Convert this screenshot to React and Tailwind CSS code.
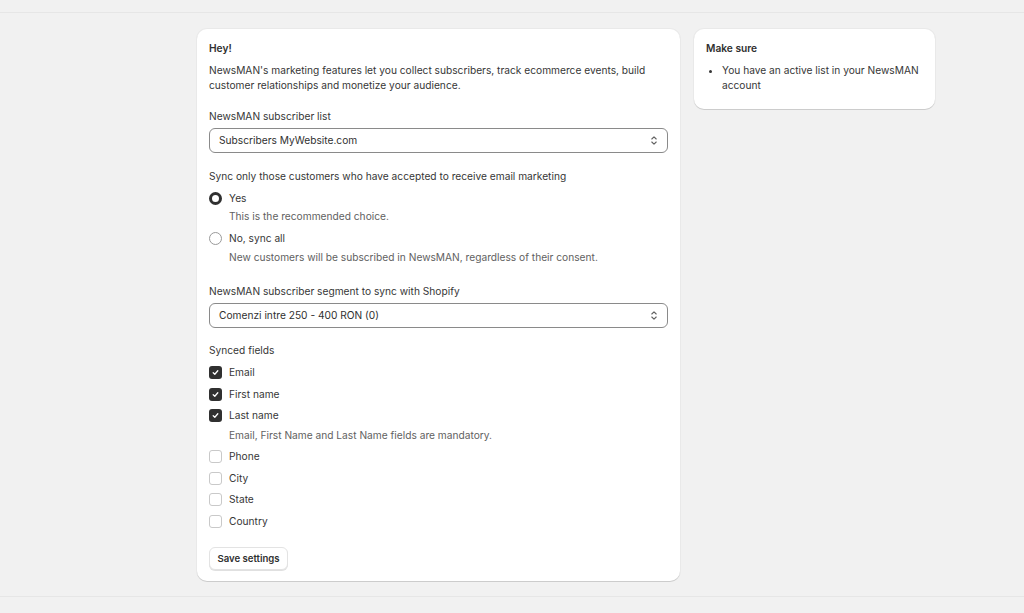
import React, { useState } from "react";

const font = { fontFamily: "Inter, 'Noto Sans', sans-serif" };

const SelectBox = ({ value }) => (
  <div className="mt-[4px] flex h-[25px] w-full items-center justify-between rounded-[6px] border border-[#8a8a8a] bg-white pl-[9px] pr-[9px] text-[#303030]">
    <span>{value}</span>
    <svg width="8" height="11" viewBox="0 0 8 11" fill="none" stroke="#616161" strokeWidth="1.1" strokeLinecap="round" strokeLinejoin="round">
      <path d="M1.8 4 L4 1.8 L6.2 4" />
      <path d="M1.8 7 L4 9.2 L6.2 7" />
    </svg>
  </div>
);

const Check = ({ checked, label }) => (
  <div className="flex h-[15px] items-center gap-[7px]">
    {checked ? (
      <span className="flex h-[13px] w-[13px] items-center justify-center rounded-[3px] bg-[#303030]">
        <svg width="9" height="9" viewBox="0 0 9 9" fill="none" stroke="white" strokeWidth="1.3" strokeLinecap="round" strokeLinejoin="round">
          <path d="M2.2 4.7 L3.8 6.2 L6.8 2.8" />
        </svg>
      </span>
    ) : (
      <span className="h-[13px] w-[13px] rounded-[3px] border border-[#c9c9c9] bg-white" />
    )}
    <span className="text-[#363636]">{label}</span>
  </div>
);

const Radio = ({ checked, label }) => (
  <div className="flex h-[15px] items-center gap-[7px]">
    {checked ? (
      <span className="h-[13px] w-[13px] rounded-full border-[3.5px] border-[#303030] bg-white" />
    ) : (
      <span className="h-[13px] w-[13px] rounded-full border border-[#9a9a9a] bg-white" />
    )}
    <span className="text-[#363636]">{label}</span>
  </div>
);

export default function App() {
  const [fields] = useState([
    { label: "Phone", checked: false },
    { label: "City", checked: false },
    { label: "State", checked: false },
    { label: "Country", checked: false },
  ]);

  return (
    <div style={font} className="flex h-[613px] w-full flex-col bg-[#f1f1f1] text-[10.2px] leading-[15px] text-[#363636]">
      <div className="h-[13px] w-full border-b border-[#e6e6e6]" />
      <div className="flex flex-1 gap-[14px] pl-[197px] pt-[16px]">
        {/* main settings card */}
        <div className="flex h-[552px] w-[483px] flex-col rounded-[10px] bg-white px-[12px] pt-[11px] shadow-[0_1px_0_rgba(0,0,0,0.12),0_0_0_1px_rgba(0,0,0,0.03)]">
          <h2 className="font-semibold leading-[16px] text-[#303030]">Hey!</h2>
          <p className="mt-[7px]">
            NewsMAN's marketing features let you collect subscribers, track ecommerce events, build customer relationships and monetize your audience.
          </p>

          <div className="mt-[16px]">NewsMAN subscriber list</div>
          <SelectBox value="Subscribers MyWebsite.com" />

          <div className="mt-[16px]">Sync only those customers who have accepted to receive email marketing</div>
          <div className="mt-[7px]">
            <Radio checked label="Yes" />
          </div>
          <div className="mt-[3px] pl-[20px] text-[#616161]">This is the recommended choice.</div>
          <div className="mt-[7px]">
            <Radio label="No, sync all" />
          </div>
          <div className="mt-[4px] pl-[20px] text-[#616161]">New customers will be subscribed in NewsMAN, regardless of their consent.</div>

          <div className="mt-[19px]">NewsMAN subscriber segment to sync with Shopify</div>
          <SelectBox value="Comenzi intre 250 - 400 RON (0)" />

          <div className="mt-[15px]">Synced fields</div>
          <div className="mt-[7px]">
            <Check checked label="Email" />
          </div>
          <div className="mt-[7px]">
            <Check checked label="First name" />
          </div>
          <div className="mt-[6px]">
            <Check checked label="Last name" />
          </div>
          <div className="mt-[5px] pl-[20px] text-[#616161]">Email, First Name and Last Name fields are mandatory.</div>
          <div className="mt-[6px] flex flex-col gap-[6.5px]">
            {fields.map((f) => (
              <Check key={f.label} checked={f.checked} label={f.label} />
            ))}
          </div>

          <div className="mt-[18px]">
            <button className="h-[23px] w-[79px] rounded-[6px] border border-[#e3e3e3] bg-white text-[9.6px] font-semibold text-[#303030] shadow-[0_1px_0_rgba(0,0,0,0.12)]">
              Save settings
            </button>
          </div>
        </div>

        {/* side note card */}
        <div className="h-[80px] w-[241px] rounded-[10px] bg-white px-[12px] pt-[11px] shadow-[0_1px_0_rgba(0,0,0,0.12),0_0_0_1px_rgba(0,0,0,0.03)]">
          <h3 className="font-semibold leading-[16px] text-[#303030]">Make sure</h3>
          <ul className="mt-[7px] list-disc pl-[16px]">
            <li>You have an active list in your NewsMAN account</li>
          </ul>
        </div>
      </div>
      <div className="h-[17px] w-full border-t border-[#e6e6e6]" />
    </div>
  );
}
